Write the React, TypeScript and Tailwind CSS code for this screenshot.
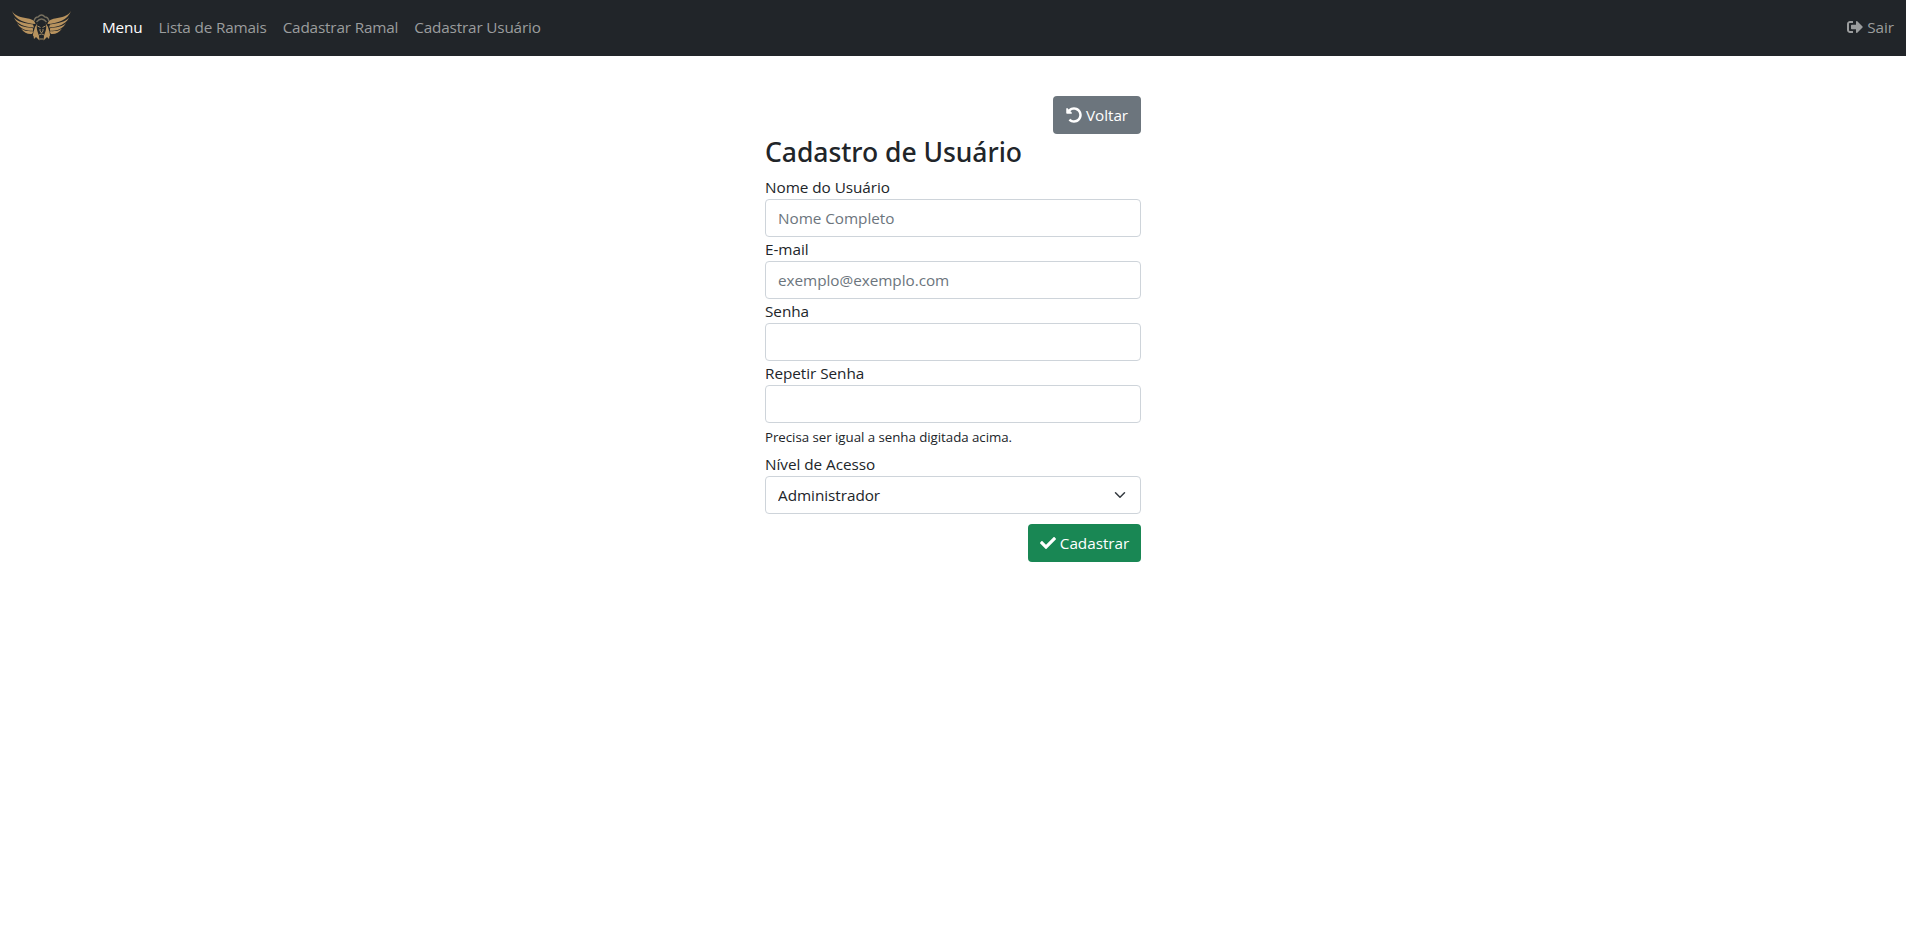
import { FaCheck, FaSignOutAlt, FaUndoAlt } from "react-icons/fa";

function Logo() {
  return (
    <svg viewBox="0 0 60 32" className="h-8 w-[60px]" fill="#b8935e">
      <g id="wing">
        <path d="M0 0C3 5 9 6.500 16 7.500C20 8 23 10 23.500 13C14 12.500 3 9 0 0Z" />
        <path d="M2 6.500C6 11.500 13 12 21 13.500L22 16.500C13 16 5 13.500 2 6.500Z" />
        <path d="M5 12C9 16.500 15 16 21 17.200L21 19.800C14 19.800 8 18 5 12Z" />
        <path d="M9 17.500C13 20.500 17 20 21.500 20.500L20 23C16 23.500 12 22 9 17.500Z" />
        <path d="M23 16L25.500 12C23.500 17 26 21 27 25L27.500 29.500L24 26L22 28L21.500 25C20 25 22 20 23 16Z" />
      </g>
      <use href="#wing" transform="translate(59 0) scale(-1 1)" />
      <path d="M22 10Q23 6 26 6Q29.500 2 33 6Q36 6 37 10M24.500 11Q29.500 5 34.500 11" fill="none" stroke="#77705f" strokeWidth="1.300" />
      <path d="M25.500 15L28.500 16.500M33.500 15L30.500 16.500M28 18L28 20L29.500 22L31 20L31 18M26 25Q29.500 21 33 25M27.500 28H31.500" fill="none" stroke="#a48c65" strokeWidth="1" />
    </svg>
  );
}

const control = "block h-[38px] w-full appearance-none rounded border border-[#ced4da] bg-white px-3 text-[#212529] placeholder:text-[#6c757d] outline-none";

function Field({ label, type = "text", placeholder }: { label: string; type?: string; placeholder?: string }) {
  return (
    <label className="block">
      <span className="block h-6">{label}</span>
      <input type={type} placeholder={placeholder} className={control} />
    </label>
  );
}

export default function App() {
  return (
    <div className="min-h-[927px] bg-white font-['Open_Sans',sans-serif] text-[15.3px] leading-6 tracking-[-0.04px] text-[#212529]">
      <nav className="flex h-14 items-center bg-[#212529] pb-0.5 pl-3 pr-3 text-[#9b9d9e]">
        <Logo />
        <div className="ml-[30px] flex gap-4 tracking-[-0.17px]">
          <a className="text-white">Menu</a>
          <a>Lista de Ramais</a>
          <a>Cadastrar Ramal</a>
          <a>Cadastrar Usuário</a>
        </div>
        <a className="ml-auto flex items-center gap-1">
          <FaSignOutAlt className="size-4" />
          Sair
        </a>
      </nav>
      <main className="mx-auto mt-10 w-[376px]">
        <div className="flex justify-end">
          <button className="flex h-[38px] w-[88px] items-center justify-center gap-1 rounded bg-[#6c757d] text-white">
            <FaUndoAlt className="size-4" />
            Voltar
          </button>
        </div>
        <h3 className="mb-[5.4px] pt-0.5 font-['Noto_Sans',sans-serif] text-[26.5px] font-medium leading-[33.6px] tracking-[-0.04px]">Cadastro de Usuário</h3>
        <Field label="Nome do Usuário" placeholder="Nome Completo" />
        <Field label="E-mail" placeholder="exemplo@exemplo.com" />
        <Field label="Senha" type="password" />
        <Field label="Repetir Senha" type="password" />
        <small className="block h-[29px] pt-0.5 text-[13.3px]">Precisa ser igual a senha digitada acima.</small>
        <label className="block">
          <span className="block h-6">Nível de Acesso</span>
          <span className="relative block">
            <select className={control}>
              <option>Administrador</option>
            </select>
            <svg viewBox="0 0 16 16" className="pointer-events-none absolute right-[13px] top-[13px] h-3 w-4" fill="none" stroke="#343a40" strokeWidth="2" strokeLinecap="round" strokeLinejoin="round">
              <path d="m2 5 6 6 6-6" />
            </svg>
          </span>
        </label>
        <div className="mt-2.5 flex justify-end">
          <button className="flex h-[38px] w-[113px] items-center justify-center gap-1 rounded bg-[#198754] text-white">
            <FaCheck className="size-4" />
            Cadastrar
          </button>
        </div>
      </main>
    </div>
  );
}
